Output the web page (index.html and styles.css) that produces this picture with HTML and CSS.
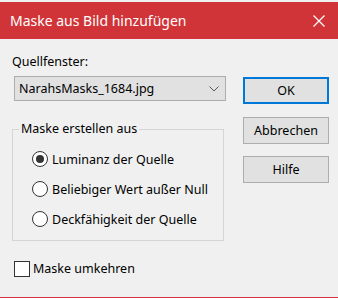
FILE: index.html
```html
<!DOCTYPE html>
<html lang="de">
<head>
<meta charset="utf-8">
<link rel="stylesheet" href="styles.css">
</head>
<body>
<div class="window">
  <div class="titlebar">
    <span class="title">Maske aus Bild hinzufügen</span>
    <svg class="close" width="12" height="12" viewBox="0 0 12 12"><path d="M0.5 0.5 L11.5 11.5 M11.5 0.5 L0.5 11.5" stroke="#fff" stroke-width="1.2" fill="none"/></svg>
  </div>
  <div class="content">
    <div class="left">
      <div class="label">Quellfenster:</div>
      <div class="combo">
        <span>NarahsMasks_1684.jpg</span>
        <svg class="chev" width="10" height="6" viewBox="0 0 10 6"><path d="M0.5 0.5 L5 5 L9.5 0.5" stroke="#5a5a5a" stroke-width="1" fill="none"/></svg>
      </div>
      <fieldset class="group">
        <legend>Maske erstellen aus</legend>
        <div class="options">
          <div class="radio-row"><span class="radio checked"></span><span>Luminanz der Quelle</span></div>
          <div class="radio-row"><span class="radio"></span><span>Beliebiger Wert außer Null</span></div>
          <div class="radio-row"><span class="radio"></span><span>Deckfähigkeit der Quelle</span></div>
        </div>
      </fieldset>
      <div class="check-row"><span class="check"></span><span>Maske umkehren</span></div>
    </div>
    <div class="right">
      <div class="btn default">OK</div>
      <div class="btn">Abbrechen</div>
      <div class="btn">Hilfe</div>
    </div>
  </div>
</div>
</body>
</html>
```
FILE: styles.css
```css
html, body {
  margin: 0;
  padding: 0;
}
body {
  width: 338px;
  height: 298px;
  overflow: hidden;
  background: #f0f0f0;
  font-family: "Noto Sans", "Open Sans", sans-serif;
  font-size: 12.5px;
  color: #000;
}
.window {
  height: 298px;
  box-sizing: border-box;
  padding-top: 2px;
  border-bottom: 1px solid #d13438;
}
.titlebar {
  height: 37px;
  background: #d13438;
  color: #fff;
  display: flex;
  align-items: center;
  justify-content: space-between;
  padding: 0 13px 0 10px;
  font-size: 14px;
}
.content {
  display: flex;
  padding-left: 12px;
}
.left {
  width: 214px;
}
.label {
  margin-top: 14px;
  line-height: 18px;
}
.combo {
  margin-top: 5px;
  margin-left: 2px;
  width: 212px;
  height: 25px;
  box-sizing: border-box;
  background: #e1e1e1;
  border: 1px solid #adadad;
  display: flex;
  align-items: center;
  justify-content: space-between;
  padding: 0 6px 0 4px;
}
.group {
  margin: 19px 0 0 0;
  padding: 6px 0 6px 0;
  width: 212px;
  box-sizing: border-box;
  border: 1px solid #d5d5d5;
  min-width: 0;
}
.group legend {
  margin-left: 6px;
  padding: 0 2px;
  line-height: 18px;
}
.options {
  padding-left: 19px;
}
.radio-row {
  height: 30px;
  display: flex;
  align-items: center;
  gap: 4px;
}
.radio {
  width: 16px;
  height: 16px;
  box-sizing: border-box;
  border: 1px solid #333;
  border-radius: 50%;
  background: #fff;
  display: flex;
  align-items: center;
  justify-content: center;
}
.radio.checked::after {
  content: "";
  width: 8px;
  height: 8px;
  border-radius: 50%;
  background: #333;
}
.check-row {
  margin-top: 19px;
  margin-left: 2px;
  display: flex;
  align-items: center;
  gap: 3px;
  line-height: 18px;
}
.check {
  width: 16px;
  height: 16px;
  box-sizing: border-box;
  border: 1px solid #333;
  background: #fff;
}
.right {
  margin-left: 17px;
  padding-top: 38px;
  display: flex;
  flex-direction: column;
  gap: 12.5px;
}
.btn {
  width: 86px;
  height: 27px;
  box-sizing: border-box;
  background: #e1e1e1;
  border: 1px solid #adadad;
  display: flex;
  align-items: center;
  justify-content: center;
}
.btn.default {
  border: 2px solid #0078d7;
}
```
